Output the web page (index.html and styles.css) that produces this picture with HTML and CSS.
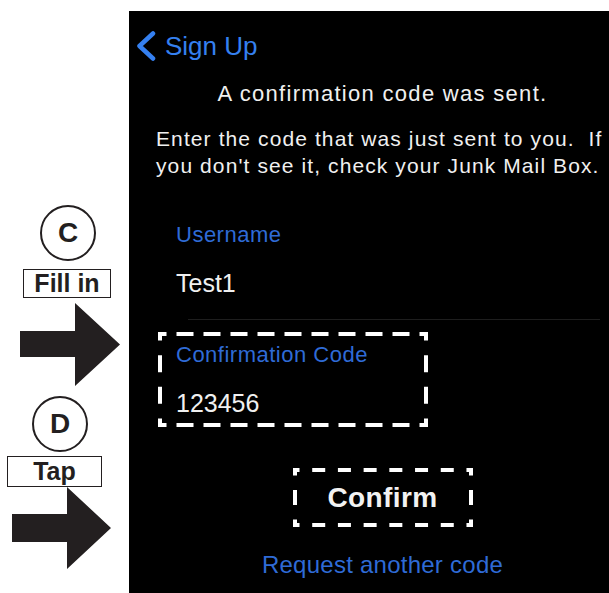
FILE: index.html
```html
<!doctype html>
<html lang="en">
<head>
	<meta charset="UTF-8">
	<title>Sign Up</title>
	<link rel="stylesheet" href="styles.css">
</head>
<body>
	<div class="page">
		<div class="notes">
			<div class="step step-c">C</div>
			<div class="tag tag-fill">Fill in</div>
			<svg class="arrow arrow-1" width="100" height="83" viewBox="0 0 100 83">
				<polygon points="0,28 55,28 55,0 100,41.5 55,83 55,54 0,54"/>
			</svg>
			<div class="step step-d">D</div>
			<div class="tag tag-tap">Tap</div>
			<svg class="arrow arrow-2" width="99" height="82" viewBox="0 0 99 82">
				<polygon points="0,27 55,27 55,0 99,41 55,82 55,55 0,55"/>
			</svg>
		</div>

		<div class="screen">
			<div class="content">
				<div class="nav">
					<svg class="back" width="20" height="30" viewBox="0 0 20 30">
						<polyline points="17,2.5 3.5,15 17,27.5"/>
					</svg>
					<span>Sign Up</span>
				</div>

				<h1 class="title">A confirmation code was sent.</h1>
				<p class="hint">Enter the code that was just sent to you.&nbsp; If<br>you don't see it, check your Junk Mail Box.</p>

				<div class="form">
					<div class="field">
						<div class="label label-user">Username</div>
						<div class="value value-user">Test1</div>
					</div>
					<div class="rule"></div>
					<div class="field field-code">
						<svg class="dash dash-code" width="270" height="95">
							<line x1="0" y1="2" x2="270" y2="2"/>
							<line x1="0" y1="93" x2="270" y2="93"/>
							<line class="side" x1="2" y1="0" x2="2" y2="95"/>
							<line class="side" x1="268" y1="0" x2="268" y2="95"/>
						</svg>
						<div class="label label-code">Confirmation Code</div>
						<div class="value value-code">123456</div>
					</div>
				</div>

				<div class="actions">
					<div class="confirm">
						<svg class="dash dash-btn" width="180" height="59">
							<line x1="0" y1="2" x2="180" y2="2"/>
							<line x1="0" y1="57" x2="180" y2="57"/>
							<line class="side" x1="2" y1="0" x2="2" y2="59"/>
							<line class="side" x1="178" y1="0" x2="178" y2="59"/>
						</svg>
						Confirm
					</div>
					<div class="resend">Request another code</div>
				</div>
			</div>
		</div>
	</div>
</body>
</html>
```

FILE: styles.css
```css
*{
	margin: 0;
	padding: 0;
}

body{
	background: #fff;
	font-family: "Liberation Sans", Arial, sans-serif;
}

.page{
	display: flex;
	height: 593px;
	padding-top: 11px;
	box-sizing: border-box;
	overflow: hidden;
}

/* annotations on the left */
.notes{
	width: 129px;
	flex: none;
	padding-top: 194px;
	box-sizing: border-box;
	display: flex;
	flex-direction: column;
	align-items: flex-start;
	color: #231f20;
}

.step{
	width: 56px;
	height: 56px;
	border: 2px solid #231f20;
	border-radius: 50%;
	box-sizing: border-box;
	display: flex;
	align-items: center;
	justify-content: center;
	font-size: 28px;
	font-weight: bold;
}

.step-c{
	margin-left: 40px;
}

.step-d{
	margin: 10px 0 0 32px;
}

.tag{
	border: 1.5px solid #231f20;
	box-sizing: border-box;
	display: flex;
	align-items: center;
	justify-content: center;
	font-size: 25px;
	font-weight: bold;
}

.tag-fill{
	width: 88px;
	height: 29px;
	margin: 8px 0 0 23px;
}

.tag-tap{
	width: 95px;
	height: 31px;
	margin: 4px 0 0 7px;
}

.arrow{
	display: block;
	fill: #231f20;
}

.arrow-1{
	margin: 5px 0 0 20px;
}

.arrow-2{
	margin-left: 12px;
}

/* phone screen */
.screen{
	flex: 1;
	background: #000;
	overflow: hidden;
}

.content{
	width: 507px;
	padding-top: 20px;
	color: #f0f0f0;
}

.nav{
	display: flex;
	align-items: center;
	height: 30px;
	padding-left: 7px;
	color: #3580f0;
	font-size: 26px;
	line-height: 30px;
}

.back{
	display: block;
	margin-right: 9px;
	fill: none;
	stroke: #3580f0;
	stroke-width: 4.5;
	stroke-linecap: round;
	stroke-linejoin: round;
}

.title{
	margin-top: 19px;
	text-align: center;
	font-size: 22px;
	font-weight: normal;
	line-height: 28px;
	letter-spacing: 1.3px;
}

.hint{
	margin-top: 17px;
	padding-left: 27px;
	font-size: 21px;
	line-height: 27px;
	letter-spacing: 1.1px;
}

.form{
	padding-left: 47px;
}

.field{
	position: relative;
}

.label{
	color: #2f6bd6;
	font-size: 22px;
	line-height: 26px;
	letter-spacing: 0.5px;
}

.label-user{
	margin-top: 43px;
}

.label-code{
	margin-top: 22px;
}

.value{
	margin-top: 20px;
	font-size: 25px;
	line-height: 30px;
}

.rule{
	height: 1px;
	margin: 21px 36px 0 12px;
	background: #1e1e1e;
}

.dash{
	position: absolute;
	stroke: #fff;
	stroke-width: 4;
	fill: none;
}

.dash-code{
	left: -18px;
	top: -10px;
	stroke-dasharray: 17 10;
	stroke-dashoffset: 8.5;
}

.dash-code .side{
	stroke-dasharray: 17 14.67;
}

.dash-btn{
	left: 0;
	top: 0;
	stroke-dasharray: 13 12.71;
	stroke-dashoffset: 6.5;
}

.dash-btn .side{
	stroke-dasharray: 15 14.5;
	stroke-dashoffset: 7.5;
}

.actions{
	display: flex;
	flex-direction: column;
	align-items: center;
}

.confirm{
	position: relative;
	width: 180px;
	height: 59px;
	margin-top: 50px;
	display: flex;
	align-items: center;
	justify-content: center;
	font-size: 28px;
	font-weight: bold;
	line-height: 32px;
	letter-spacing: 0.4px;
	color: #f2f2f2;
}

.resend{
	margin-top: 24px;
	color: #2f6bd6;
	font-size: 24px;
	line-height: 28px;
	letter-spacing: 0.25px;
}
```
